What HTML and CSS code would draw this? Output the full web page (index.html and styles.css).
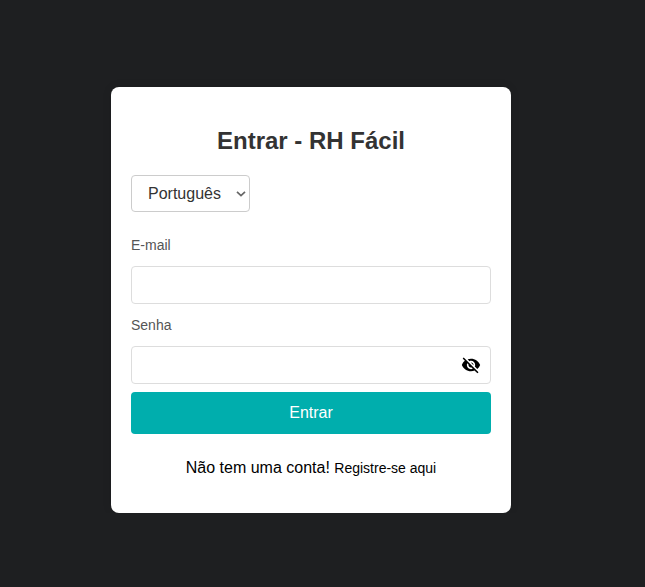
FILE: index.html
```html
<!DOCTYPE html>
<html lang="pt-BR">
<head>
<meta charset="utf-8">
<title>Entrar - RH Fácil</title>
<link rel="stylesheet" href="styles.css">
</head>
<body>
<main class="card">
  <h1 class="title">Entrar - RH Fácil</h1>
  <div class="language">
    <span>Português</span>
    <svg class="chevron" viewBox="0 0 10 6" width="10" height="6"><path d="M1 .9 5 4.7 9 .9"/></svg>
  </div>
  <form>
    <label class="label" for="email">E-mail</label>
    <input class="input" id="email" type="email">
    <label class="label" for="password">Senha</label>
    <div class="password">
      <input class="input" id="password" type="password">
      <svg class="eye" viewBox="0 0 24 24" width="20" height="20"><path d="M12 7c2.76 0 5 2.24 5 5 0 .65-.13 1.26-.36 1.83l2.92 2.92c1.51-1.26 2.7-2.89 3.43-4.75-1.73-4.39-6-7.5-11-7.5-1.4 0-2.74.25-3.98.7l2.16 2.16C10.74 7.13 11.35 7 12 7zM2 4.27l2.28 2.28.46.46C3.08 8.3 1.78 10.02 1 12c1.73 4.39 6 7.5 11 7.5 1.55 0 3.03-.3 4.38-.84l.42.42L19.73 22 21 20.73 3.27 3 2 4.27zM7.53 9.8l1.55 1.55c-.05.21-.08.43-.08.65 0 1.66 1.34 3 3 3 .22 0 .44-.03.65-.08l1.55 1.55c-.67.33-1.41.53-2.2.53-2.76 0-5-2.24-5-5 0-.79.2-1.53.53-2.2zm4.31-.78 3.15 3.15.02-.16c0-1.66-1.34-3-3-3l-.17.01z"/></svg>
    </div>
    <button class="submit" type="button">Entrar</button>
  </form>
  <p class="register">Não tem uma conta! <a class="link">Registre-se aqui</a></p>
</main>
</body>
</html>
```
FILE: styles.css
```css
* {
  box-sizing: border-box;
}

body {
  margin: 0;
  padding: 87px 0 0 111px;
  background: #1e1f21;
  font-family: "Liberation Sans", Arial, sans-serif;
}

.card {
  width: 400px;
  height: 426px;
  padding: 40px 20px 0;
  border-radius: 8px;
  background: #fff;
  box-shadow: 0 0 10px rgba(0, 0, 0, 0.1);
}

.title {
  margin: 0 0 20px;
  color: #333;
  font-size: 24px;
  line-height: 28px;
  text-align: center;
}

.language {
  display: flex;
  align-items: center;
  justify-content: space-between;
  width: 119px;
  height: 37px;
  margin-bottom: 25px;
  padding: 0 3px 0 16px;
  border: 1px solid #ccc;
  border-radius: 4px;
  color: #333;
  font-size: 16px;
}

.chevron {
  fill: none;
  stroke: #666;
  stroke-width: 1.7;
}

.label {
  display: block;
  height: 16px;
  margin-bottom: 13px;
  color: #555;
  font-size: 14px;
  line-height: 16px;
}

.input {
  display: block;
  width: 100%;
  height: 38px;
  margin-bottom: 13px;
  padding: 10px;
  border: 1px solid #ddd;
  border-radius: 4px;
  font-size: 14px;
}

.password {
  position: relative;
}

.password .input {
  margin-bottom: 8px;
}

.eye {
  position: absolute;
  top: 9px;
  right: 10px;
  fill: #000;
}

.submit {
  display: block;
  width: 100%;
  height: 42px;
  padding: 0;
  border: 0;
  border-radius: 4px;
  background: #00aead;
  color: #fff;
  font-family: inherit;
  font-size: 16px;
}

.register {
  margin: 25px 0 0;
  color: #000;
  font-size: 16px;
  line-height: 18px;
  text-align: center;
}

.link {
  font-size: 14px;
}
```
